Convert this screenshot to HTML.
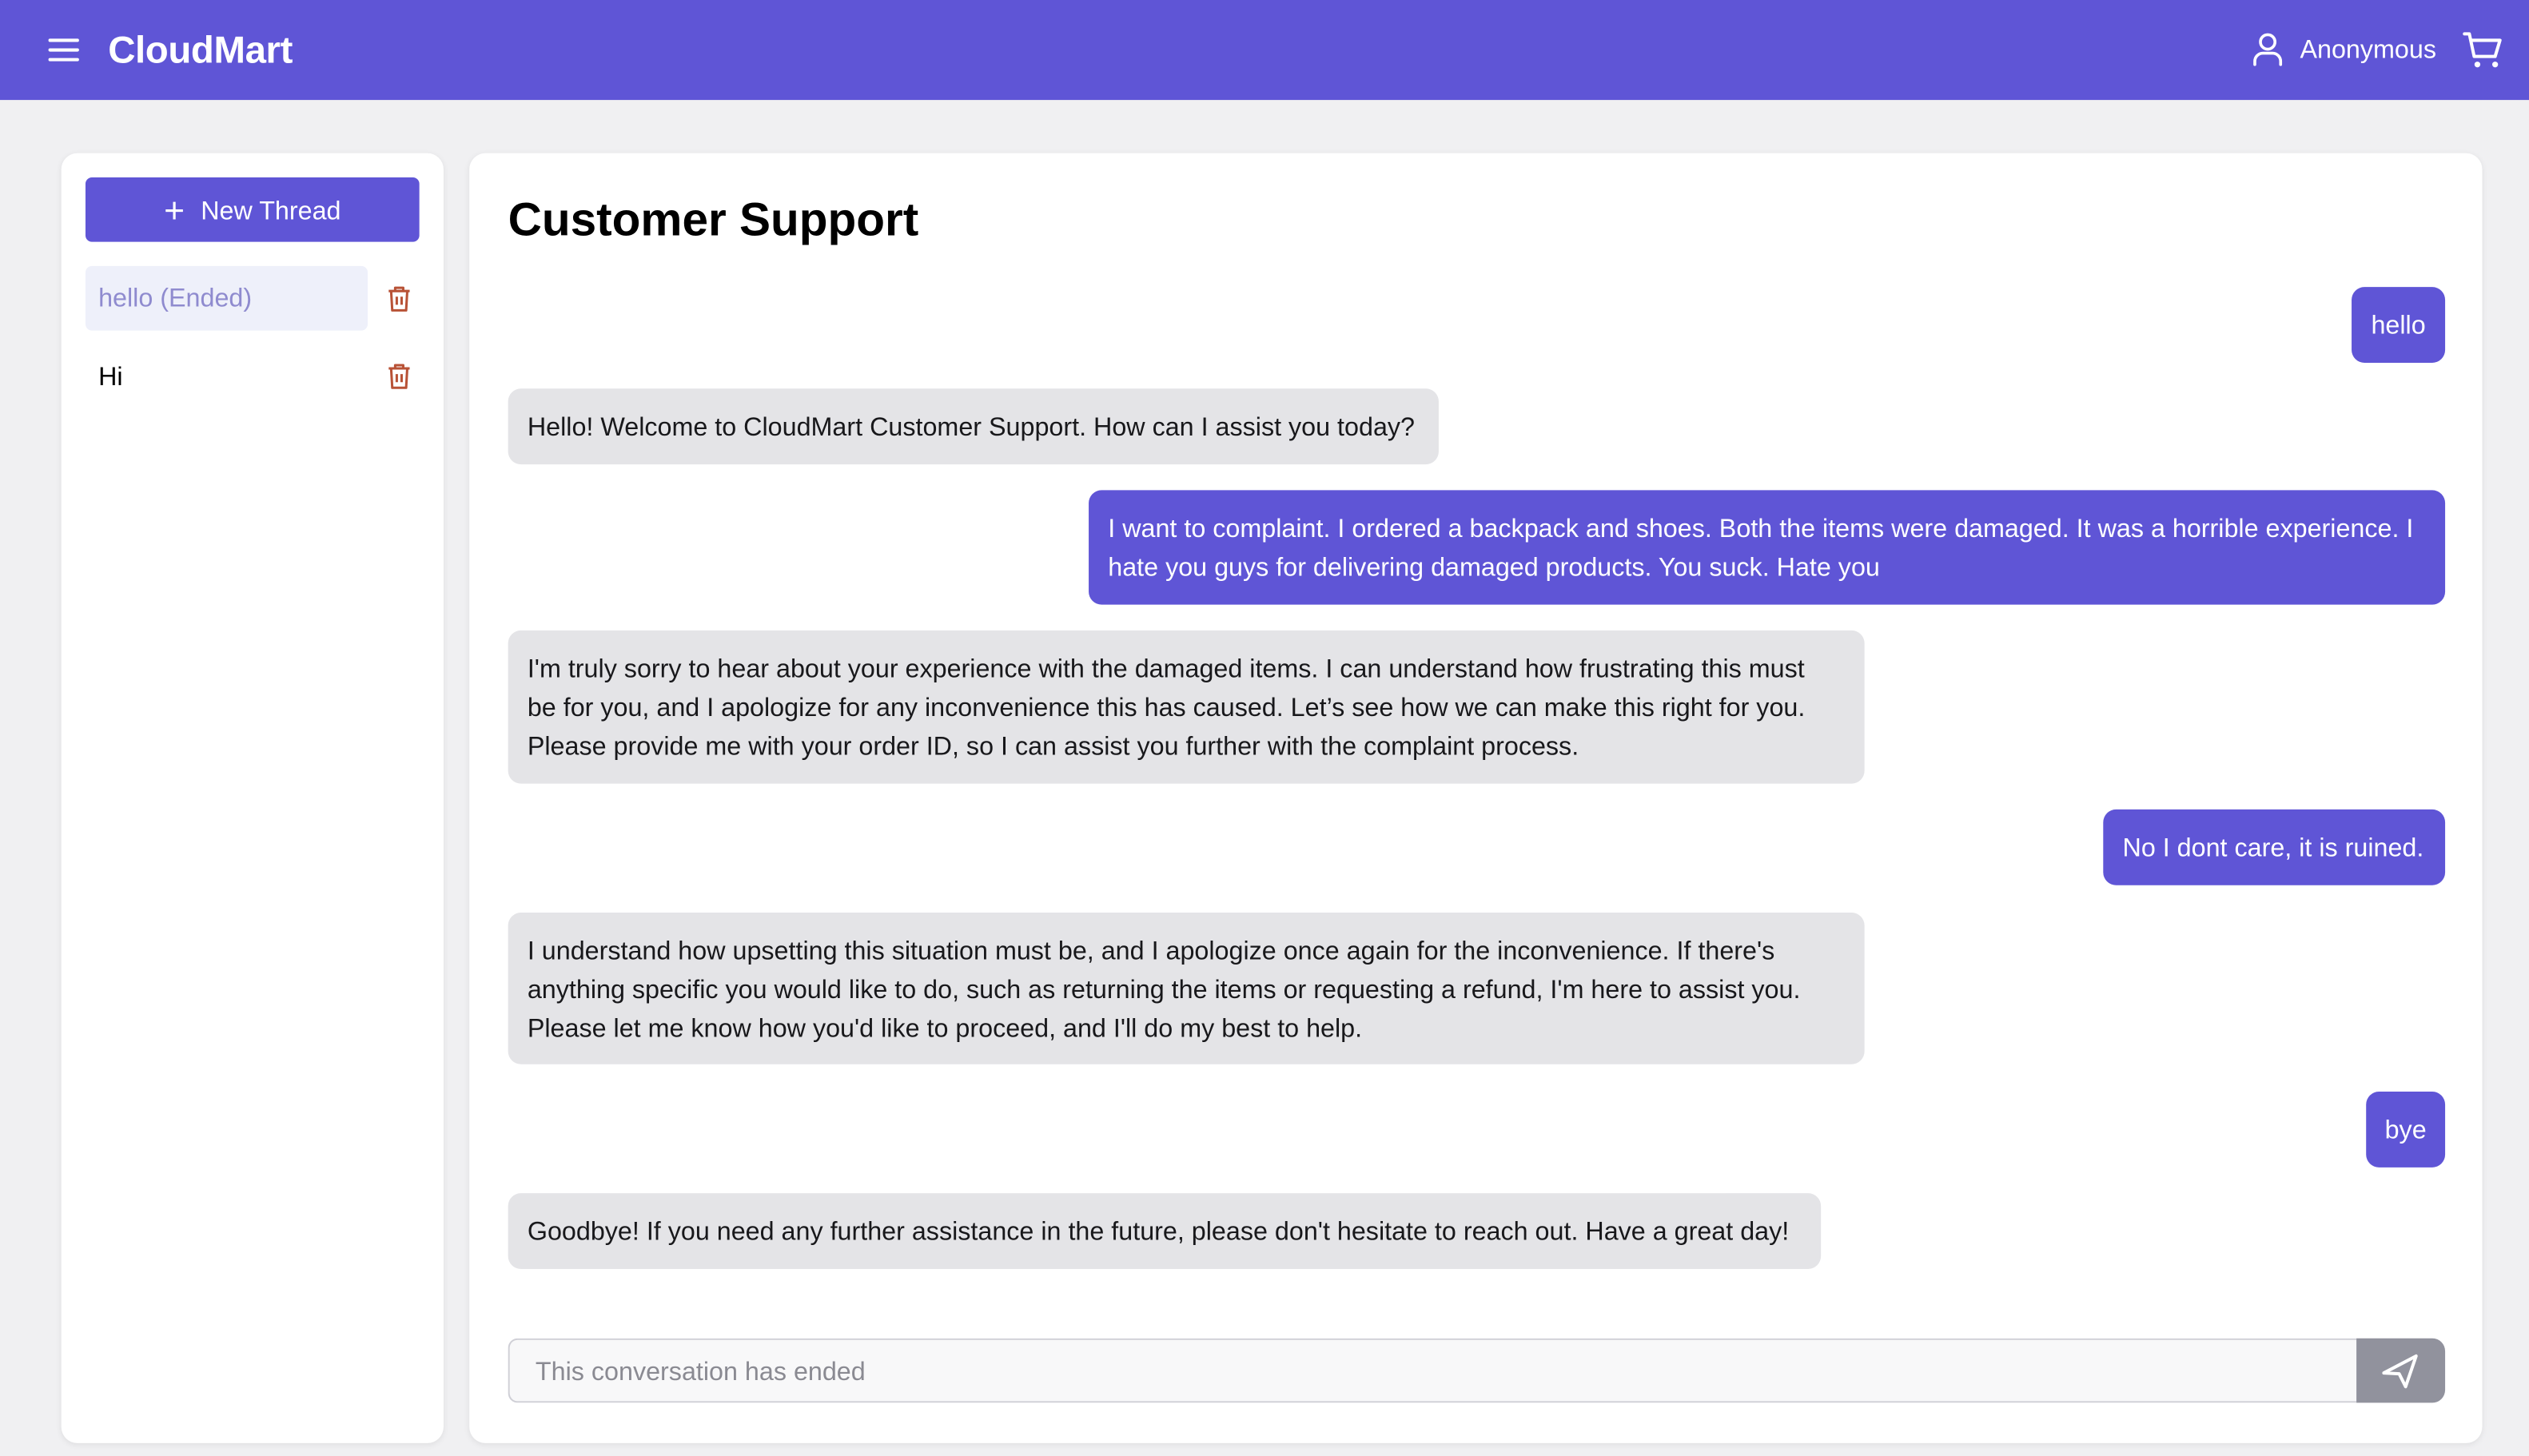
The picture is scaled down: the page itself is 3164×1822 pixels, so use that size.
<!DOCTYPE html>
<html><head><meta charset="utf-8"><style>
html,body{margin:0;padding:0;width:3164px;height:1822px;overflow:hidden;background:#f0f0f2;font-family:"Liberation Sans",sans-serif}
#w{position:absolute;left:0;top:0;width:1568px;height:903px;transform:scale(2.01786,2.01772);transform-origin:0 0}
.a{position:absolute}
.hdr{left:0;top:0;width:1568px;height:62px;background:#5f55d6}
.card{background:#fff;border-radius:10px;box-shadow:0 1px 4px rgba(0,0,0,.08)}
.b{position:absolute;border-radius:8px;padding:13px 12px 11px;font-size:16px;line-height:24px;white-space:nowrap;box-sizing:border-box}
.u{background:#5f55d6;color:#fff}
.g{background:#e4e4e7;color:#18181b}
</style></head><body><div id="w">
<div class="a hdr"></div>
<svg class="a" style="left:30px;top:22px" width="20" height="18" viewBox="0 0 20 18"><path d="M1 3h17M1 9h17M1 15h17" stroke="#fff" stroke-width="2" stroke-linecap="round"/></svg>
<div class="a" style="left:67px;top:18px;color:#fff;font-weight:bold;font-size:23.5px;letter-spacing:-0.2px">CloudMart</div>
<svg class="a" style="left:1396px;top:20px" width="20" height="22" viewBox="0 0 20 22"><circle cx="10" cy="6" r="4.5" fill="none" stroke="#fff" stroke-width="1.8"/><path d="M2 20v-2a5 5 0 0 1 5-5h6a5 5 0 0 1 5 5v2" fill="none" stroke="#fff" stroke-width="1.8" stroke-linecap="round"/></svg>
<div class="a" style="left:1426px;top:23px;color:#fff;font-size:16px">Anonymous</div>
<svg class="a" style="left:1526px;top:18px" width="26" height="26" viewBox="0 0 26 26"><path d="M2 3h3l3 14h13l3-10H6.5" fill="none" stroke="#fff" stroke-width="2" stroke-linejoin="round" stroke-linecap="round"/><circle cx="10" cy="22" r="1.8" fill="#fff"/><circle cx="21" cy="22" r="1.8" fill="#fff"/></svg>

<div class="a card" style="left:38px;top:95px;width:237px;height:800px"></div>
<div class="a" style="left:53px;top:110px;width:207px;height:40px;background:#5f55d6;border-radius:4px;color:#fff;font-size:16px;line-height:42px;text-align:center"><span style="font-size:22px;vertical-align:-2px;margin-right:10px;font-weight:300">+</span>New Thread</div>
<div class="a" style="left:53px;top:165px;width:175px;height:40px;background:#eef0fa;border-radius:4px;color:#8f8bcf;font-size:16px;line-height:42px;padding-left:8px;box-sizing:border-box">hello (Ended)</div>
<div class="a" style="left:61px;top:226px;font-size:16px;color:#000">Hi</div>
<svg class="a" style="left:240px;top:177px" width="15" height="17" viewBox="0 0 15 17"><path d="M1 3.5h13M5 3.5V1.5h5v2M2.5 3.5l.7 12h8.6l.7-12M6 7v5M9 7v5" fill="none" stroke="#b85236" stroke-width="1.5" stroke-linejoin="round"/></svg>
<svg class="a" style="left:240px;top:225px" width="15" height="17" viewBox="0 0 15 17"><path d="M1 3.5h13M5 3.5V1.5h5v2M2.5 3.5l.7 12h8.6l.7-12M6 7v5M9 7v5" fill="none" stroke="#b85236" stroke-width="1.5" stroke-linejoin="round"/></svg>

<div class="a card" style="left:291px;top:95px;width:1248px;height:800px"></div>
<div class="a" style="left:315px;top:121px;font-size:29px;font-weight:bold;color:#000">Customer Support</div>

<div class="b u" style="left:1458px;top:178px;width:58px;height:47px;text-align:center;padding:13px 0 0">hello</div>
<div class="b g" style="left:315px;top:241px;width:577px;height:47px">Hello! Welcome to CloudMart Customer Support. How can I assist you today?</div>
<div class="b u" style="left:675px;top:304px;width:841px;height:71px">I want to complaint. I ordered a backpack and shoes. Both the items were damaged. It was a horrible experience. I<br>hate you guys for delivering damaged products. You suck. Hate you</div>
<div class="b g" style="left:315px;top:391px;width:841px;height:95px">I'm truly sorry to hear about your experience with the damaged items. I can understand how frustrating this must<br>be for you, and I apologize for any inconvenience this has caused. Let’s see how we can make this right for you.<br>Please provide me with your order ID, so I can assist you further with the complaint process.</div>
<div class="b u" style="left:1304px;top:502px;width:212px;height:47px">No I dont care, it is ruined.</div>
<div class="b g" style="left:315px;top:566px;width:841px;height:94px">I understand how upsetting this situation must be, and I apologize once again for the inconvenience. If there's<br>anything specific you would like to do, such as returning the items or requesting a refund, I'm here to assist you.<br>Please let me know how you'd like to proceed, and I'll do my best to help.</div>
<div class="b u" style="left:1467px;top:677px;width:49px;height:47px;text-align:center;padding:13px 0 0">bye</div>
<div class="b g" style="left:315px;top:740px;width:814px;height:47px">Goodbye! If you need any further assistance in the future, please don't hesitate to reach out. Have a great day!</div>

<div class="a" style="left:315px;top:830px;width:1146px;height:40px;box-sizing:border-box;border:1px solid #cfcfd6;border-right:none;border-radius:6px 0 0 6px;background:#f8f8f9;color:#8a8a92;font-size:16px;line-height:41px;padding-left:16px">This conversation has ended</div>
<div class="a" style="left:1461px;top:830px;width:55px;height:40px;background:#91929d;border-radius:0 8px 8px 0"></div>
<svg class="a" style="left:1476px;top:838px" width="26" height="24" viewBox="0 0 26 24"><path d="M2 13.5L22 3l-6.5 19-4-8z" fill="none" stroke="#fff" stroke-width="2" stroke-linejoin="round"/></svg>
</div></body></html>
